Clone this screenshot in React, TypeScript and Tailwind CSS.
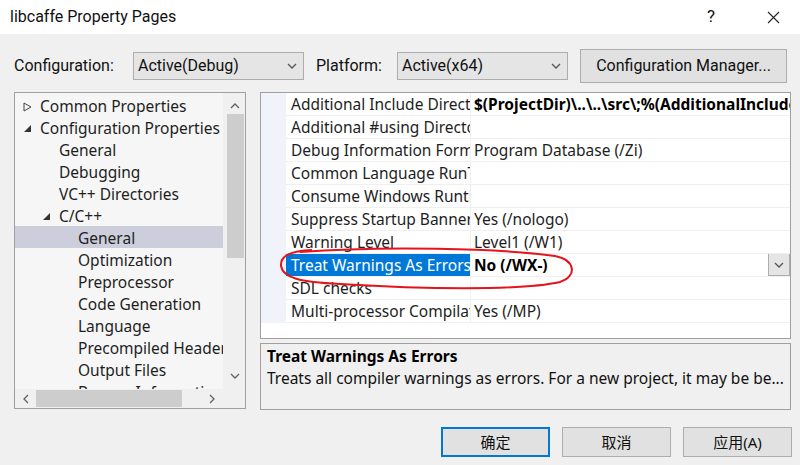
import React from "react";

const ui = { fontFamily: '"Noto Sans", "Noto Sans CJK SC", sans-serif' };
const narrow = { fontFamily: 'Roboto, "Noto Sans CJK SC", sans-serif' };

type Row = { name: string; value: string; bold?: boolean; selected?: boolean };

const rows: Row[] = [
  { name: "Additional Include Directories", value: "$(ProjectDir)\\..\\..\\src\\;%(AdditionalIncludeDirectories)", bold: true },
  { name: "Additional #using Directories", value: "" },
  { name: "Debug Information Format", value: "Program Database (/Zi)" },
  { name: "Common Language RunTime Support", value: "" },
  { name: "Consume Windows Runtime Extension", value: "" },
  { name: "Suppress Startup Banner", value: "Yes (/nologo)" },
  { name: "Warning Level", value: "Level1 (/W1)" },
  { name: "Treat Warnings As Errors", value: "No (/WX-)", bold: true, selected: true },
  { name: "SDL checks", value: "" },
  { name: "Multi-processor Compilation", value: "Yes (/MP)" },
];

type TreeItem = { label: string; indent: number; arrow?: "open" | "closed"; selected?: boolean };

const tree: TreeItem[] = [
  { label: "Common Properties", indent: 0, arrow: "closed" },
  { label: "Configuration Properties", indent: 0, arrow: "open" },
  { label: "General", indent: 1 },
  { label: "Debugging", indent: 1 },
  { label: "VC++ Directories", indent: 1 },
  { label: "C/C++", indent: 1, arrow: "open" },
  { label: "General", indent: 2, selected: true },
  { label: "Optimization", indent: 2 },
  { label: "Preprocessor", indent: 2 },
  { label: "Code Generation", indent: 2 },
  { label: "Language", indent: 2 },
  { label: "Precompiled Headers", indent: 2 },
  { label: "Output Files", indent: 2 },
  { label: "Browse Information", indent: 2 },
];

const Chevron = ({ dir = "down", className = "" }: { dir?: "down" | "up" | "left" | "right"; className?: string }) => {
  const pts = {
    down: "1,3 5,7 9,3",
    up: "1,7 5,3 9,7",
    left: "7,1 3,5 7,9",
    right: "3,1 7,5 3,9",
  }[dir];
  return (
    <svg width="10" height="10" viewBox="0 0 10 10" className={className}>
      <polyline points={pts} fill="none" stroke="currentColor" strokeWidth="1.3" />
    </svg>
  );
};

const Combo = ({ value, width }: { value: string; width: string }) => (
  <div className={`${width} h-[28px] bg-[#e5e5e5] border border-[#adadad] flex items-center pl-[4px] pr-[6px] text-[16px] text-[#111]`}>
    <span className="flex-1">{value}</span>
    <Chevron className="text-[#555]" />
  </div>
);

const TreeView = () => (
  <div className="w-[232px] h-[317px] border border-[#a0a0a0] bg-[#f6f6f6] flex flex-col" style={ui}>
    <div className="flex flex-1 min-h-0">
      <div className="flex-1 min-w-0 overflow-hidden pt-[1px]">
        {tree.map((t, i) => (
          <div
            key={i}
            className={`h-[22px] pt-[3px] flex items-center whitespace-nowrap text-[15.5px] text-[#1e1e1e] ${t.selected ? "bg-[#cccedb]" : ""}`}
            style={{ paddingLeft: 8 + t.indent * 19 }}
          >
            <span className="w-[16px] shrink-0 flex items-center">
              {t.arrow === "closed" && (
                <svg width="9" height="10" viewBox="0 0 9 10">
                  <polygon points="1,1 8,5 1,9" fill="none" stroke="#444" strokeWidth="1" />
                </svg>
              )}
              {t.arrow === "open" && (
                <svg width="9" height="9" viewBox="0 0 9 9">
                  <polygon points="8,1 8,8 1,8" fill="#333" />
                </svg>
              )}
            </span>
            <span className="ml-[1px]">{t.label}</span>
          </div>
        ))}
      </div>
      <div className="w-[22px] bg-[#f0f0f0] flex flex-col items-center pl-[2px]">
        <Chevron dir="up" className="text-[#606060] mt-[8px]" />
        <div className="w-[17px] h-[144px] bg-[#cdcdcd] mt-[3px]" />
        <div className="flex-1" />
        <Chevron dir="down" className="text-[#606060] mb-[8px]" />
      </div>
    </div>
    <div className="h-[19px] flex bg-[#f0f0f0]">
      <div className="flex-1 flex items-center">
        <Chevron dir="left" className="text-[#606060] ml-[6px]" />
        <div className="w-[146px] h-[17px] bg-[#cdcdcd] ml-[5px]" />
        <div className="flex-1" />
        <Chevron dir="right" className="text-[#606060] mr-[6px]" />
      </div>
      <div className="w-[22px]" />
    </div>
  </div>
);

const PropertyGrid = () => (
  <div className="h-[247px] border border-[#a0a0a0] bg-white flex" style={ui}>
    <div className="w-[25px] h-[230px] bg-[#f0f4fa]" />
    <div className="flex-1 min-w-0 flex flex-col">
      {rows.map((r, i) => (
        <div key={i} className="h-[23px] flex border-b border-[#f0f0f0] text-[15.5px] text-[#1e1e1e]">
          <div
            className={`w-[185px] shrink-0 border-r border-[#f0f0f0] pl-[5px] overflow-hidden whitespace-nowrap leading-[22px] ${r.selected ? "bg-[#0078d7] text-white" : ""}`}
          >
            {r.name}
          </div>
          <div className={`flex-1 min-w-0 pl-[3px] overflow-hidden whitespace-nowrap leading-[22px] flex ${r.bold ? "font-bold text-black" : ""}`}>
            <span className="flex-1 min-w-0 overflow-hidden">{r.value}</span>
            {r.selected && (
              <div className="w-[22px] h-[23px] -mt-[1px] shrink-0 bg-[#e5e5e5] border border-[#adadad] flex items-center justify-center text-[#555]">
                <Chevron />
              </div>
            )}
          </div>
        </div>
      ))}
    </div>
  </div>
);

const Button = ({ label, primary }: { label: string; primary?: boolean }) => (
  <div
    className={`w-[109px] h-[30px] bg-[#e1e1e1] flex items-center justify-center text-[15px] text-[#111] ${primary ? "border-2 border-[#0078d7]" : "border border-[#adadad]"}`}
    style={ui}
  >
    {label}
  </div>
);

export default function App() {
  return (
    <div className="w-[800px] h-[465px] bg-[#f0f0f0] relative overflow-hidden flex flex-col">
      <div className="h-[34px] bg-white flex items-center pl-[10px] text-[16px] text-[#111]" style={narrow}>
        <span>libcaffe Property Pages</span>
        <span className="ml-auto mr-[52px] text-[17px]">?</span>
        <svg width="13" height="13" viewBox="0 0 13 13" className="mr-[20px]">
          <path d="M1 1 L12 12 M12 1 L1 12" stroke="#222" strokeWidth="1.1" />
        </svg>
      </div>

      <div className="flex items-center mt-[15px] pl-[14px] h-[34px] text-[16px] text-[#111]" style={narrow}>
        <span className="w-[119px]">Configuration:</span>
        <Combo value="Active(Debug)" width="w-[171px]" />
        <span className="ml-[12px] w-[81px]">Platform:</span>
        <Combo value="Active(x64)" width="w-[171px]" />
        <div className="ml-[12px] w-[207px] h-[34px] bg-[#e1e1e1] border border-[#adadad] flex items-center justify-center">
          Configuration Manager...
        </div>
      </div>

      <div className="flex mt-[9px] pl-[14px] gap-[14px]">
        <TreeView />
        <div className="w-[531px] flex flex-col gap-[4px]">
          <PropertyGrid />
          <div className="h-[67px] border border-[#a0a0a0] bg-[#f0f0f0] px-[6px] pt-[1px] text-[15.5px] text-[#111]" style={ui}>
            <div className="font-bold leading-[22px] text-black">Treat Warnings As Errors</div>
            <div className="leading-[22px] whitespace-nowrap overflow-hidden">
              Treats all compiler warnings as errors. For a new project, it may be be...
            </div>
          </div>
        </div>
      </div>

      <div className="flex justify-end gap-[12px] pr-[8px] mt-[17px]">
        <Button label="确定" primary />
        <Button label="取消" />
        <Button label="应用(A)" />
      </div>

      <svg className="absolute left-0 top-0 pointer-events-none" width="800" height="465" viewBox="0 0 800 465">
        <path
          d="M 300 252 C 380 246, 500 248, 555 256 C 575 260, 578 276, 560 282 C 520 291, 420 289, 340 284 C 300 282, 283 278, 281 266 C 280 256, 290 251, 312 250"
          fill="none"
          stroke="#e3141b"
          strokeWidth="2"
        />
      </svg>
    </div>
  );
}
